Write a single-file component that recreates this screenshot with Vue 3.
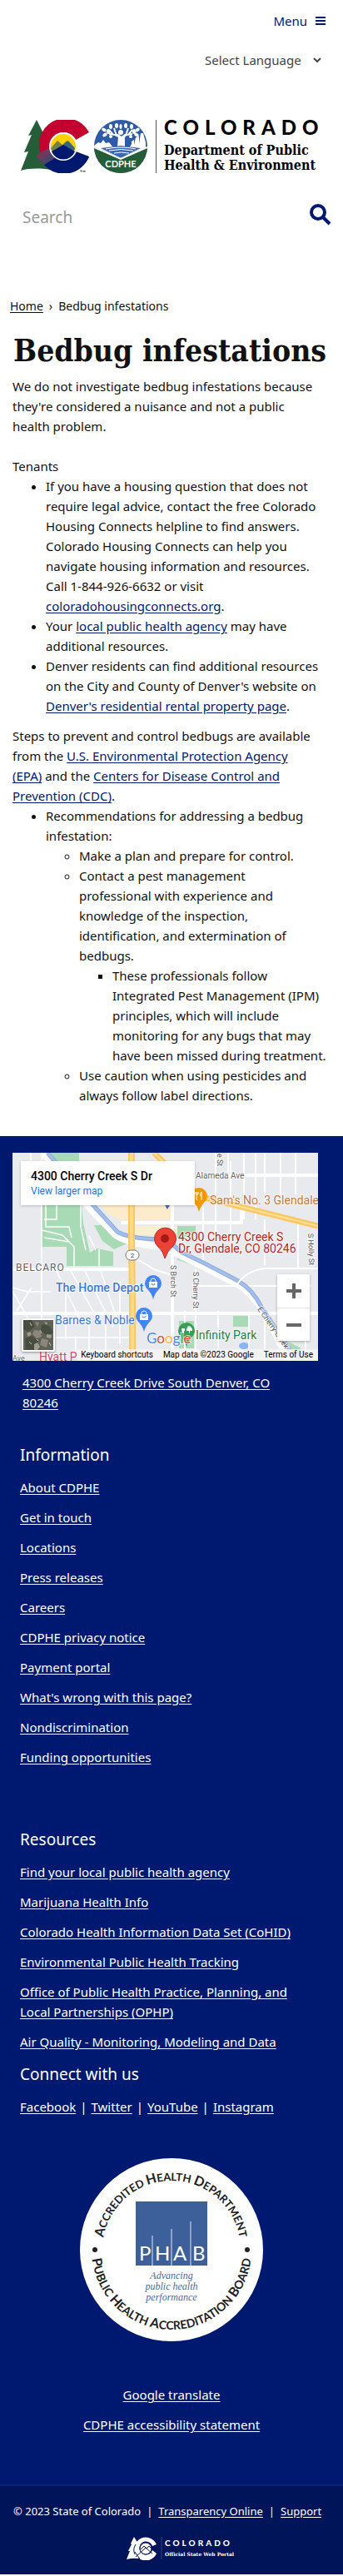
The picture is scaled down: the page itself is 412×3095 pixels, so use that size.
<script setup>
import { ref } from 'vue'

const search = ref('')
const language = ref('')

const information = [
  'About CDPHE',
  'Get in touch',
  'Locations',
  'Press releases',
  'Careers',
  'CDPHE privacy notice',
  'Payment portal',
  "What's wrong with this page?",
  'Nondiscrimination',
  'Funding opportunities',
]
const resources = [
  'Find your local public health agency',
  'Marijuana Health Info',
  'Colorado Health Information Data Set (CoHID)',
  'Environmental Public Health Tracking',
  'Office of Public Health Practice, Planning, and Local\u00a0Partnerships (OPHP)',
  'Air Quality - Monitoring, Modeling and Data',
]
const social = ['Facebook', 'Twitter', 'YouTube', 'Instagram']
</script>

<template>
  <div class="page">
    <header class="header">
      <div class="menu-row">
        <button class="menu-button" type="button">
          Menu
          <svg width="12" height="12" viewBox="0 0 12 12" aria-hidden="true">
            <path d="M0 2h12M0 6h12M0 10h12" stroke="currentColor" stroke-width="2" />
          </svg>
        </button>
      </div>
      <div class="language-row">
        <select v-model="language" class="language" aria-label="Select Language">
          <option value="">Select Language</option>
        </select>
        <svg class="chevron" width="10" height="6" viewBox="0 0 10 6" aria-hidden="true">
          <path d="M1 1l4 4 4-4" fill="none" stroke="#444" stroke-width="2" />
        </svg>
      </div>

      <a href="#" class="brand" aria-label="Colorado Department of Public Health and Environment">
        <svg class="brand-icons" width="152" height="64" viewBox="0 0 152 64" aria-hidden="true">
          <path d="M19 0L9 19l4-1-9 21 5-1L0 61c10-3 22-3 36-1V20l-9-4z" fill="#245d38" />
          <path d="M82 15A32 32 0 1 0 82 45L66 38A16 16 0 1 1 66 24Z" fill="#c3002f" />
          <path d="M28 54A32 32 0 0 0 82 44L66 38 51 27 38 40Z" fill="#001970" />
          <path d="M19 42l14-8 6 8-11 12c-6-5-8-8-9-12z" fill="#6d3a5d" />
          <path d="M24 50l11-10 6 6-13 8z" fill="#4a4468" />
          <circle cx="51" cy="32" r="17" fill="#fff" />
          <circle cx="51" cy="32" r="15" fill="#ffd100" />
          <path d="M36 34l8-9 6 5 5-5 10 10a15 15 0 0 1-29-1z" fill="#7a8043" />
          <path d="M48 32l9-7 8 9-4 6z" fill="#35647e" />
          <path d="M37 38l14-8 14 8a15 15 0 0 1-28 0z" fill="#001970" />
          <path d="M71 61h3M72.500 61v2M75 63v-2l1 1 1-1v2" fill="none" stroke="#222" stroke-width=".6" />
          <clipPath id="seal"><circle cx="120" cy="32" r="32" /></clipPath>
          <g clip-path="url(#seal)">
            <path d="M88 0h64v64H88z" fill="#2d5ba8" />
            <path d="M88 31l5-4 3 1 3-4 3 4 4-1 4 5h6l1-12-4-3h4l4 3 4-3h4l-4 4v12l5 1 3-5v-3l3-2v6l2-9 4-1v9l2-13h3l3 11v8l-32 12-30-13z" fill="#fff" />
            <path d="M96 34l24-3 24 3-24 12z" fill="#3b69b1" />
            <path d="M102 35q18-4 36 0M106 37q14-3 29 0M112 40q8-2 18 0" fill="none" stroke="#fff" />
            <path d="M88 32l32 14 32-14v32H88z" fill="#245d38" />
            <path d="M86 32l34 15 34-15" fill="none" stroke="#fff" stroke-width="2" />
            <path d="M120 23q-4-6-14-6M120 23q4-6 14-6M111 18l-5-6M129 18l5-6M115 19l-3-9M126 19l3-9" fill="none" stroke="#fff" stroke-width="2" />
            <circle cx="120" cy="15" r="3" fill="#fff" />
            <g fill="#fff">
              <ellipse cx="100" cy="12" rx="3" ry="2" transform="rotate(30 100 12)" />
              <ellipse cx="101" cy="18" rx="3" ry="2" transform="rotate(-30 101 18)" />
              <ellipse cx="108" cy="8" rx="2" ry="3" />
              <ellipse cx="105" cy="14" rx="2" ry="3" />
              <ellipse cx="108" cy="20" rx="2" ry="2" />
              <ellipse cx="115" cy="7" rx="2" ry="3" />
              <ellipse cx="120" cy="8" rx="1.500" ry="3" />
              <ellipse cx="126" cy="7" rx="2" ry="3" />
              <ellipse cx="133" cy="8" rx="2" ry="3" />
              <ellipse cx="136" cy="14" rx="2" ry="3" />
              <ellipse cx="132" cy="20" rx="2" ry="2" />
              <ellipse cx="140" cy="12" rx="3" ry="2" transform="rotate(-30 140 12)" />
              <ellipse cx="139" cy="18" rx="3" ry="2" transform="rotate(30 139 18)" />
            </g>
          </g>
          <text x="120" y="57" text-anchor="middle" font-family="Lato, sans-serif" font-weight="700" font-size="11" fill="#fff">CDPHE</text>
        </svg>
        <span class="brand-text">
          <span class="brand-state">COLORADO</span>
          <span class="brand-dept">Department of Public<br>Health &amp; Environment</span>
        </span>
      </a>

      <form class="search" role="search" @submit.prevent>
        <input v-model="search" type="search" placeholder="Search" aria-label="Search">
        <button type="submit" aria-label="Submit search">
          <svg width="26" height="26" viewBox="0 0 26 26" aria-hidden="true">
            <circle cx="10" cy="10" r="8" fill="none" stroke="currentColor" stroke-width="4" />
            <path d="M16 16l8 8" stroke="currentColor" stroke-width="4" />
          </svg>
        </button>
      </form>
    </header>

    <main class="main">
      <nav class="breadcrumb" aria-label="Breadcrumb">
        <a href="#">Home</a>
        <span aria-hidden="true">›</span>
        <span>Bedbug infestations</span>
      </nav>
      <h1>Bedbug infestations</h1>
      <div class="content">
        <p>We do not investigate bedbug infestations because they're considered a nuisance and not a public health&nbsp;problem.</p>
        <p class="lead">Tenants</p>
        <ul>
          <li>If you have a housing question that does not require legal advice, contact the free Colorado Housing Connects helpline to find answers. Colorado Housing Connects can help you navigate housing information and resources. Call&nbsp;1-844-926-6632 or visit <a href="#">coloradohousingconnects.org</a>.</li>
          <li>Your <a href="#">local public health agency</a> may have additional&nbsp;resources.</li>
          <li>Denver residents can find additional resources on the City and County of Denver's website on <a href="#">Denver's residential rental property page</a>.</li>
        </ul>
        <p class="steps">Steps to prevent and control bedbugs are available from the <a href="#">U.S. Environmental Protection Agency<br>(EPA)</a> and the <a href="#">Centers for Disease Control and Prevention&nbsp;(CDC)</a>.</p>
        <ul>
          <li>Recommendations for addressing a bedbug infestation:
            <ul>
              <li>Make a plan and prepare for control.</li>
              <li>Contact a pest management<br>professional with experience and<br>knowledge of the inspection,<br>identification, and extermination of bedbugs.
                <ul>
                  <li>These professionals follow<br>Integrated Pest Management (IPM) principles, which will include<br>monitoring for any bugs that may<br>have been missed during treatment.</li>
                </ul>
              </li>
              <li>Use caution when using pesticides and always follow label directions.</li>
            </ul>
          </li>
        </ul>
      </div>
    </main>

    <footer class="footer">
      <section class="map" aria-label="Map">
        <svg class="map-canvas" viewBox="0 0 367 250" preserveAspectRatio="xMinYMin slice" aria-hidden="true">
          <path d="M0 0h367v250H0z" fill="#e8eaed" />
          <path d="M105 63h88v18h-62l-12-5z" fill="#fdeccb" />
          <path d="M145 88h36l20 2-6 10-50-2z" fill="#fbefd2" />
          <g fill="#a8dab5">
            <path d="M42 0h38v14H55z" />
            <path d="M35 63h48l2 22 8 35 8-5 20 4v17H65v-23l-30 0z" />
            <path d="M98 87l14 0 18 12 10 3v6l-18 8-14-10z" />
            <path d="M198 88h22v10l-22 5zM200 202h18v33h-18zM265 196h18v13h-18z" />
            <path d="M198 120l32 10 32 16 18 14-20-6-34-16-28-9z" opacity=".7" />
            <path d="M325 224l20 10 10 14h-15z" />
          </g>
          <ellipse cx="278" cy="232" rx="6" ry="4" fill="#8ab4f8" />
          <g fill="none" stroke="#fff" stroke-width="2">
            <path d="M35 0v140M22 0v16M40 63v26h28l3 13M53 63v17h-15M82 63v26l6 28M35 93l25 6 14 14v25M92 100l8 17M104 116v20M38 102l30 5M0 162l18 5h28M5 190l18-28M0 166l20 35M52 140l30 62M68 138l34 62M85 138l36 72M104 136l20 60M64 170v55M76 220v20M92 205v35M112 205v35M129 155v75M50 222h90" stroke-width="1.500" />
            <path d="M206 10v53M229 65v75M244 0v105M262 10v87M303 0v50M322 0v50M340 0v50M303 80v55M343 80v58M220 140v100M247 190v60M303 190v55M284 195v55M352 195v55M259 0v27M278 0v80M292 0v80M207 190v50" />
            <path d="M192 63v187" stroke-width="4" />
            <path d="M0 193h367M130 84h145v-18M220 27h147M0 140h142" stroke-width="4" />
            <path d="M35 140v60M219 105h40M219 160h140M148 127l24 14 17 5" />
          </g>
          <path d="M36 0l58 68 30 31q16 10 46 13 18 2 29 10l34 17 39 20q25 17 42 55l18 36" fill="none" stroke="#fff" stroke-width="8" />
          <path d="M42 0l54 62 30 33q14 8 50 9 14 2 26 15l29 14 40 21q17 10 28 31l34 52" fill="none" stroke="#9aa8c5" stroke-width="5" />
          <path d="M42 0l54 62 30 33q14 8 50 9 14 2 26 15l29 14 40 21q17 10 28 31l34 52" fill="none" stroke="#9cc0f9" stroke-width="3" />
          <path d="M143 0v100l1 80v70" fill="none" stroke="#fbc75f" stroke-width="8" />
          <path d="M143 0v100l1 80v70" fill="none" stroke="#ffd98a" stroke-width="4" />
          <path d="M170 0l52 52 145 36" fill="none" stroke="#fbc75f" stroke-width="7" />
          <path d="M170 0l52 52 145 36" fill="none" stroke="#ffe09a" stroke-width="2" />
          <path d="M270 158q10-16 33-19h64" fill="none" stroke="#fff" stroke-width="2" />
          <rect x="136" y="117" width="16" height="12" rx="6" fill="#fff" stroke="#777" />
          <g font-family="Roboto, sans-serif" stroke="#fff" stroke-width="2" stroke-opacity=".7" paint-order="stroke">
            <text x="144" y="126" font-size="8" fill="#444" text-anchor="middle">2</text>
            <text x="220" y="31" font-size="10" fill="#666">Alameda Ave</text>
            <text x="237" y="62" font-size="14" fill="#c8793b">Sam's No. 3 Glendale</text>
            <text x="199" y="106" font-size="14" fill="#b3261e">4300 Cherry Creek S</text>
            <text x="199" y="120" font-size="14" fill="#b3261e">Dr, Glendale, CO 80246</text>
            <text x="4" y="142" font-size="12" letter-spacing="1" fill="#5f6368">BELCARO</text>
            <text x="52" y="167" font-size="14" font-weight="500" fill="#3c78d8">The Home Depot</text>
            <text x="51" y="206" font-size="14" fill="#3c78d8">Barnes &amp; Noble</text>
            <text x="220" y="224" font-size="14" fill="#258045">Infinity Park</text>
            <text x="32" y="250" font-size="14" fill="#d9417c">Hyatt P</text>
            <text x="0" y="250" font-size="9" fill="#666">Ave</text>
            <text font-size="9" fill="#555" transform="translate(190 135) rotate(90)">S Birch St</text>
            <text font-size="9" fill="#555" transform="translate(217 143) rotate(90)">S Cherry St</text>
            <text font-size="9" fill="#555" transform="translate(355 97) rotate(88)">S Holly St</text>
            <text font-size="9" fill="#555" transform="translate(246 1) rotate(90)">e St</text>
            <text font-size="9" fill="#555" transform="translate(294 188) rotate(55)">E Cherry Creek</text>
          </g>
          <path d="M224 71q-2-7-6-11-4-4-4-8a10 10 0 0 1 20 0q0 4-4 8-4 4-6 11z" fill="#f29900" />
          <path d="M221 47v4M220 47v3h3v-3M221 51v6M227 47v10M227 47q-2 2-1 5h1" fill="none" stroke="#fff" />
          <path d="M169 176q-2-7-6-11-4-4-4-8a10 10 0 0 1 20 0q0 4-4 8-4 4-6 11z" fill="#4285f4" />
          <path d="M164 155h10v7h-10z" fill="#fff" />
          <path d="M166 155v-1a3 3 0 0 1 6 0v1" fill="none" stroke="#fff" />
          <path d="M167 157a2 2 0 0 0 4 0" fill="none" stroke="#4285f4" />
          <path d="M158 215q-2-7-6-11-4-4-4-8a10 10 0 0 1 20 0q0 4-4 8-4 4-6 11z" fill="#4285f4" />
          <path d="M153 194h10v7h-10z" fill="#fff" />
          <path d="M155 194v-1a3 3 0 0 1 6 0v1" fill="none" stroke="#fff" />
          <path d="M156 196a2 2 0 0 0 4 0" fill="none" stroke="#4285f4" />
          <path d="M209 233q-2-7-6-11-4-4-4-8a10 10 0 0 1 20 0q0 4-4 8-4 4-6 11z" fill="#259a4b" opacity=".9" />
          <path d="M204 217v-3h-1v-3h4v3h-1v3M212 217v-3h-3q0-5 3-6 4 1 4 6h-3v3z" fill="#fff" />
          <text x="161" y="229" font-family="Lato, sans-serif" font-size="17" stroke="#fff" stroke-width="2" stroke-opacity=".7" paint-order="stroke"><tspan fill="#4285f4">G</tspan><tspan fill="#ea4335">o</tspan><tspan fill="#fbbc04">o</tspan><tspan fill="#4285f4">g</tspan><tspan fill="#34a853">l</tspan><tspan fill="#ea4335">e</tspan></text>
          <path d="M183 127q-2-9-8-14a13 13 0 1 1 17 0q-6 5-9 14z" fill="#ea4335" stroke="#c5221f" />
          <circle cx="183" cy="103" r="5" fill="#a61916" />
          <path d="M183 63h6l-3 5z" fill="#4b68b8" />
        </svg>
        <div class="map-card">
          <strong>4300 Cherry Creek S Dr</strong>
          <a href="#">View larger map</a>
        </div>
        <button class="map-type" type="button" aria-label="Show satellite imagery">
          <svg width="36" height="36" viewBox="0 0 36 36" aria-hidden="true">
            <path d="M0 0h36v36H0z" fill="#5f6254" />
            <path d="M0 0h10l4 8-8 6-6-3zM22 5l9 2 5 8-7 4-8-6zM2 22l9-3 7 7-5 10H3z" fill="#474d40" />
            <path d="M13 12l7 1 2 7-6 2-5-5zM22 22l8 2-2 9-8-3zM14 2l5 1-2 5z" fill="#8c877a" />
            <path d="M4 16l4-2 2 3-4 3zM28 17l6 1-1 4-5-1zM13 29l4-2 3 5-3 4h-4zM25 2l4 1-1 3z" fill="#a09a8c" />
            <path d="M8 3l2 4M20 12l2 4M7 26l3 3M31 27l2 4M16 23l2 2" stroke="#c1bcae" />
          </svg>
        </button>
        <div class="map-zoom">
          <button type="button" aria-label="Zoom in">
            <svg width="18" height="18" viewBox="0 0 18 18" aria-hidden="true"><path d="M0 9h18M9 0v18" stroke="#666" stroke-width="4" /></svg>
          </button>
          <button type="button" aria-label="Zoom out">
            <svg width="18" height="18" viewBox="0 0 18 18" aria-hidden="true"><path d="M0 9h18" stroke="#666" stroke-width="4" /></svg>
          </button>
        </div>
        <div class="map-legal">
          <button type="button">Keyboard shortcuts</button>
          <span>Map data ©2023 Google</span>
          <a href="#">Terms of Use</a>
        </div>
      </section>
      <p class="address"><a href="#">4300 Cherry Creek Drive South Denver, CO 80246</a></p>

      <section class="links">
        <h2>Information</h2>
        <ul>
          <li v-for="item in information" :key="item"><a href="#">{{ item }}</a></li>
        </ul>
      </section>
      <section class="links resources">
        <h2>Resources</h2>
        <ul>
          <li v-for="item in resources" :key="item"><a href="#">{{ item }}</a></li>
        </ul>
        <h2>Connect with us</h2>
        <p class="social">
          <template v-for="(item, i) in social" :key="item">
            <span v-if="i" aria-hidden="true">|</span>
            <a href="#">{{ item }}</a>
          </template>
        </p>
      </section>

      <svg class="seal" width="220" height="220" viewBox="0 0 220 220" role="img" aria-label="Public Health Accreditation Board seal">
        <circle cx="110" cy="110" r="110" fill="#fff" />
        <path id="arc-top" d="M27 110A83 83 0 0 1 193 110" fill="none" />
        <path id="arc-bottom" d="M14 110A96 96 0 0 0 206 110" fill="none" />
        <g font-family="Lato, sans-serif" font-weight="700" fill="#222" text-anchor="middle">
          <text font-size="13"><textPath href="#arc-top" startOffset="50%"><tspan font-size="16">A</tspan>CCREDITED <tspan font-size="16">H</tspan>EALTH <tspan font-size="16">D</tspan>EPARTMENT</textPath></text>
          <text font-size="14"><textPath href="#arc-bottom" startOffset="50%"><tspan font-size="16">P</tspan>UBLIC <tspan font-size="16">H</tspan>EALTH <tspan font-size="16">A</tspan>CCREDITATION <tspan font-size="16">B</tspan>OARD</textPath></text>
        </g>
        <circle cx="18" cy="110" r="3" fill="#222" />
        <circle cx="201" cy="110" r="3" fill="#222" />
        <path d="M67 52h86v77H67z" fill="#3d609b" />
        <path d="M87 93v36M110 85v46M133 76v55" stroke="#dbe6f5" />
        <text x="71 90 112 135" y="123" font-family="Lato, sans-serif" font-size="24" fill="#fff">PHAB</text>
        <g font-family="'Liberation Serif', serif" font-style="italic" font-size="12" fill="#4c6a9c" text-anchor="middle">
          <text x="110" y="145">Advancing</text>
          <text x="110" y="158">public health</text>
          <text x="110" y="171">performance</text>
        </g>
      </svg>

      <p class="center-links">
        <a href="#">Google translate</a>
        <a href="#">CDPHE accessibility statement</a>
      </p>

      <div class="legal">
        <p class="legal-row">
          <span>© 2023 State of Colorado</span>
          <span aria-hidden="true">|</span>
          <a href="#">Transparency Online</a>
          <span aria-hidden="true">|</span>
          <a href="#">Support</a>
        </p>
        <a href="#" class="portal" aria-label="Colorado Official State Web Portal">
          <svg width="136" height="28" viewBox="0 0 136 28" aria-hidden="true">
            <path d="M9 0L5 8l1 1-4 8 2 0-4 10q8-2 14-1V8z" fill="#fff" />
            <path d="M36 9A14 14 0 1 0 36 20L31 16A8 8 0 1 1 31 11Z" fill="#fff" />
            <circle cx="23" cy="14" r="7" fill="#fff" stroke="#001459" />
            <path d="M11 24l12-11 8 7M17 15l4-4 3 3 3-3 4 4M10 18q2 4 6 8M11 9q-4 6-1 12" fill="none" stroke="#001459" />
            <path d="M42 0v27" stroke="#34457f" />
            <text x="46" y="11" font-family="Lato, sans-serif" font-weight="900" font-size="10" letter-spacing="3" fill="#fff">COLORADO</text>
            <text x="46" y="23" font-family="'DejaVu Serif', serif" font-weight="700" font-size="6" fill="#fff">Official State Web Portal</text>
          </svg>
        </a>
      </div>
    </footer>
  </div>
</template>

<style>
html,
body {
  background: #fff;
}
</style>

<style scoped>
.page {
  font-family: "Noto Sans", "Open Sans", sans-serif;
  font-size: 15px;
  line-height: 24px;
  color: #111;
}
h1,
h2,
p,
ul {
  margin: 0;
  font-weight: 400;
}
button,
input,
select {
  padding: 0;
  border: 0;
  background: none;
  font: inherit;
  color: inherit;
}
a {
  color: #001970;
  text-underline-offset: 2px;
}
.menu-row {
  display: flex;
  justify-content: flex-end;
  height: 50px;
  padding-right: 21px;
}
.menu-button {
  display: flex;
  align-items: center;
  gap: 10px;
  color: #001970;
}
.language-row {
  display: flex;
  justify-content: flex-end;
  align-items: center;
  gap: 14px;
  height: 44px;
  padding-right: 26px;
}
.language {
  appearance: none;
  color: #444;
}
.brand {
  display: flex;
  gap: 10px;
  margin: 50px 24px 0 25px;
  color: #000;
  text-decoration: none;
}
.brand-icons {
  flex: none;
}
.brand-text {
  display: flex;
  flex-direction: column;
  gap: 10px;
  height: 64px;
  padding-left: 9px;
  border-left: 1px solid #555;
  white-space: nowrap;
}
.brand-state {
  font: 900 24px/18px Lato, sans-serif;
  letter-spacing: 7px;
}
.brand-dept {
  font: 700 16px/18px "DejaVu Serif Condensed", "DejaVu Serif", serif;
}
.search {
  display: flex;
  align-items: center;
  gap: 12px;
  margin: 23px 14px 0 27px;
}
.search input {
  flex: 1;
  min-width: 0;
  height: 60px;
  outline: 0;
  font-size: 19px;
}
.search input::placeholder {
  color: #999;
  opacity: 1;
}
.search button {
  height: 50px;
  color: #001970;
}
.breadcrumb {
  display: flex;
  gap: 7px;
  margin: 65px 12px 0;
  font-size: 14px;
}
.breadcrumb a {
  color: #111;
}
h1 {
  margin: 17px 0 0 16px;
  font: 700 37px/48px "DejaVu Serif Condensed", "DejaVu Serif", serif;
  white-space: nowrap;
}
.content {
  margin: 7px 15px 0;
}
.lead {
  margin-top: 24px;
}
.steps {
  margin-top: 12px;
}
.content ul {
  padding-left: 40px;
}
.footer {
  margin-top: 37px;
  padding-top: 20px;
  background: #001970;
  color: #fff;
}
.footer a {
  color: #fff;
}
.map {
  position: relative;
  height: 250px;
  margin: 0 30px 0 15px;
  overflow: hidden;
  font-family: Roboto, sans-serif;
}
.map-canvas {
  display: block;
  width: 100%;
  height: 250px;
}
.map-card {
  position: absolute;
  top: 10px;
  left: 10px;
  display: flex;
  flex-direction: column;
  width: 197px;
  padding: 9px 0 8px 12px;
  background: #fff;
  color: #000;
  box-shadow: 0 1px 3px rgba(0, 0, 0, 0.2);
  font-size: 12px;
  line-height: 18px;
}
.map-card strong {
  font-size: 14px;
  font-weight: 500;
}
.map-type {
  position: absolute;
  left: 11px;
  bottom: 11px;
  border: 2px solid #fff;
  border-radius: 2px;
  box-shadow: 0 1px 3px rgba(0, 0, 0, 0.4);
}
.map-type svg {
  display: block;
}
.map-zoom {
  position: absolute;
  right: 10px;
  bottom: 24px;
  width: 39px;
  background: #fff;
  box-shadow: 0 1px 3px rgba(0, 0, 0, 0.3);
}
.map-zoom button {
  display: flex;
  align-items: center;
  justify-content: center;
  width: 100%;
  height: 40px;
}
.map-zoom button + button {
  border-top: 1px solid #e6e6e6;
}
.map-legal {
  position: absolute;
  right: 0;
  bottom: 0;
  display: flex;
  gap: 12px;
  padding: 0 6px 0 4px;
  background: rgba(245, 245, 245, 0.8);
  color: #000;
  font-size: 10px;
  line-height: 14px;
}
.footer .map-legal a {
  color: #000;
  text-decoration: none;
}
.footer .map-card a {
  color: #1a73e8;
  text-decoration: none;
}
.address {
  margin: 14px 60px 0 27px;
}
.links {
  padding: 36px 24px 0;
}
.links h2 {
  margin-bottom: 12px;
  font-size: 19px;
  line-height: 30px;
}
.links ul {
  display: flex;
  flex-direction: column;
  gap: 12px;
  padding: 0;
  list-style: none;
}
.resources {
  padding-top: 72px;
}
.resources ul + h2 {
  margin-top: 12px;
}
.social {
  display: flex;
  gap: 5px;
}
.seal {
  display: block;
  margin: 50px auto 0;
}
.center-links {
  display: flex;
  flex-direction: column;
  align-items: center;
  gap: 12px;
  margin-top: 52px;
}
.legal {
  margin-top: 60px;
  padding: 18px 16px 17px;
  border-top: 2px solid #0d246f;
  background: #001459;
}
.legal-row {
  display: flex;
  gap: 7px;
  font-size: 13px;
}
.portal {
  display: flex;
  justify-content: center;
  margin-top: 19px;
  padding-left: 28px;
}
</style>
